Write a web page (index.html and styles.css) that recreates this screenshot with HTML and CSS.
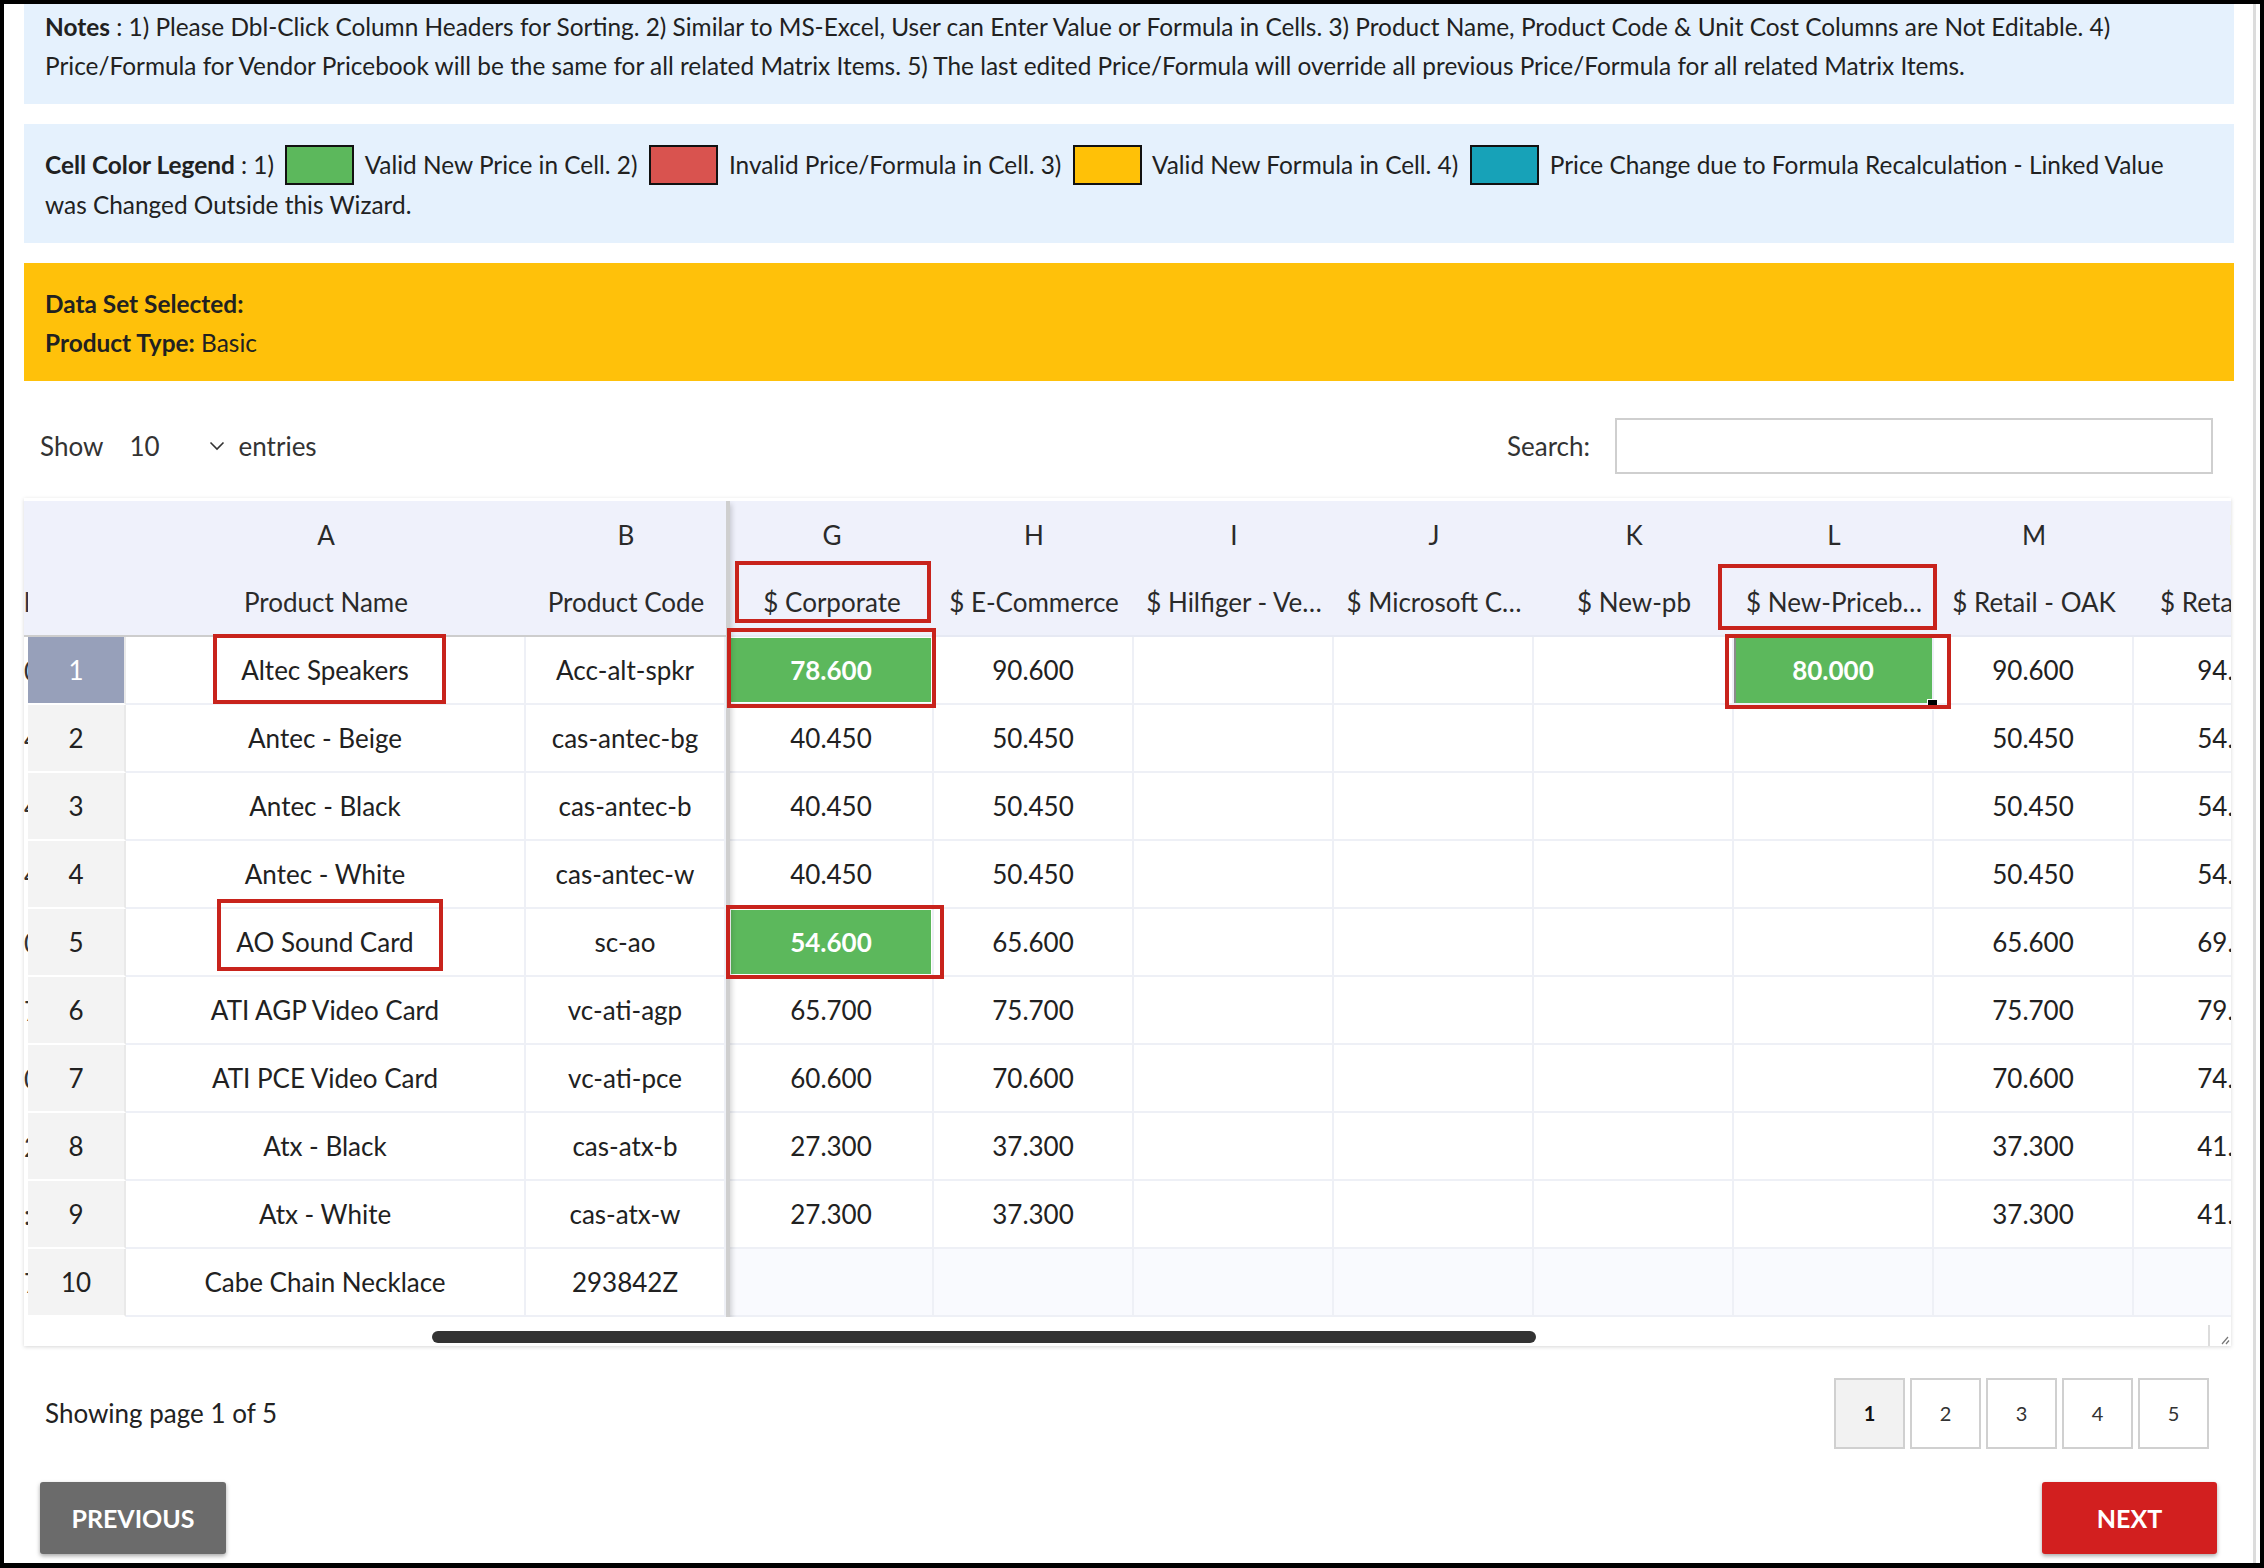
FILE: index.html
```html
<!DOCTYPE html>
<html>
<head>
<meta charset="utf-8">
<link rel="stylesheet" href="styles.css">
</head>
<body>
<div class="frame">
<div class="page">
  <div class="panel notes"><b>Notes</b> : 1) Please Dbl-Click Column Headers for Sorting. 2) Similar to MS-Excel, User can Enter Value or Formula in Cells. 3) Product Name, Product Code &amp; Unit Cost Columns are Not Editable. 4)<br>Price/Formula for Vendor Pricebook will be the same for all related Matrix Items. 5) The last edited Price/Formula will override all previous Price/Formula for all related Matrix Items.</div>
  <div class="panel legend"><b>Cell Color Legend</b> : 1) <span class="sw sw-green"></span> Valid New Price in Cell. 2) <span class="sw sw-red"></span> Invalid Price/Formula in Cell. 3) <span class="sw sw-yellow"></span> Valid New Formula in Cell. 4) <span class="sw sw-teal"></span> Price Change due to Formula Recalculation - Linked Value<br>was Changed Outside this Wizard.</div>
  <div class="panel dataset"><b>Data Set Selected:</b><br><b>Product Type:</b> Basic</div>

  <div class="controls">
    <div class="length"><span>Show</span><span class="sel"><span>10</span><svg width="16" height="10" viewBox="0 0 16 10"><path d="M1.5 1.5 L8 8 L14.5 1.5" fill="none" stroke="#333" stroke-width="1.6"/></svg></span><span>entries</span></div>
    <div class="search"><span>Search:</span><span class="input"></span></div>
  </div>

  <div class="table">
    <div class="grid">
      <div class="frozen">
        <div class="row hrow"><div class="c strip"></div><div class="c num"></div><div class="c">A</div><div class="c">B</div></div>
        <div class="row hrow names"><div class="c strip"><span>l</span></div><div class="c num"></div><div class="c">Product Name</div><div class="c">Product Code</div></div>
        <div class="row drow"><div class="c strip"><span>0</span></div><div class="c num sel-num">1</div><div class="c">Altec Speakers</div><div class="c">Acc-alt-spkr</div></div>
        <div class="row drow"><div class="c strip"><span>4</span></div><div class="c num">2</div><div class="c">Antec - Beige</div><div class="c">cas-antec-bg</div></div>
        <div class="row drow"><div class="c strip"><span>4</span></div><div class="c num">3</div><div class="c">Antec - Black</div><div class="c">cas-antec-b</div></div>
        <div class="row drow"><div class="c strip"><span>4</span></div><div class="c num">4</div><div class="c">Antec - White</div><div class="c">cas-antec-w</div></div>
        <div class="row drow"><div class="c strip"><span>0</span></div><div class="c num">5</div><div class="c">AO Sound Card</div><div class="c">sc-ao</div></div>
        <div class="row drow"><div class="c strip"><span>7</span></div><div class="c num">6</div><div class="c">ATI AGP Video Card</div><div class="c">vc-ati-agp</div></div>
        <div class="row drow"><div class="c strip"><span>0</span></div><div class="c num">7</div><div class="c">ATI PCE Video Card</div><div class="c">vc-ati-pce</div></div>
        <div class="row drow"><div class="c strip"><span>2</span></div><div class="c num">8</div><div class="c">Atx - Black</div><div class="c">cas-atx-b</div></div>
        <div class="row drow"><div class="c strip"><span>:</span></div><div class="c num">9</div><div class="c">Atx - White</div><div class="c">cas-atx-w</div></div>
        <div class="row drow"><div class="c strip"><span>7</span></div><div class="c num">10</div><div class="c">Cabe Chain Necklace</div><div class="c">293842Z</div></div>
      </div>
      <div class="scroll">
        <div class="row hrow"><div class="c">G</div><div class="c">H</div><div class="c">I</div><div class="c">J</div><div class="c">K</div><div class="c">L</div><div class="c">M</div><div class="c last">N</div></div>
        <div class="row hrow names"><div class="c">$ Corporate</div><div class="c">$ E-Commerce</div><div class="c">$ Hilfiger - Ve…</div><div class="c">$ Microsoft C…</div><div class="c">$ New-pb</div><div class="c">$ New-Priceb…</div><div class="c">$ Retail - OAK</div><div class="c last">$ Retail - SFO</div></div>
        <div class="row drow"><div class="c ok">78.600</div><div class="c">90.600</div><div class="c"></div><div class="c"></div><div class="c"></div><div class="c ok cur">80.000<span class="handle"></span></div><div class="c">90.600</div><div class="c last">94.600</div></div>
        <div class="row drow"><div class="c">40.450</div><div class="c">50.450</div><div class="c"></div><div class="c"></div><div class="c"></div><div class="c"></div><div class="c">50.450</div><div class="c last">54.450</div></div>
        <div class="row drow"><div class="c">40.450</div><div class="c">50.450</div><div class="c"></div><div class="c"></div><div class="c"></div><div class="c"></div><div class="c">50.450</div><div class="c last">54.450</div></div>
        <div class="row drow"><div class="c">40.450</div><div class="c">50.450</div><div class="c"></div><div class="c"></div><div class="c"></div><div class="c"></div><div class="c">50.450</div><div class="c last">54.450</div></div>
        <div class="row drow"><div class="c ok">54.600</div><div class="c">65.600</div><div class="c"></div><div class="c"></div><div class="c"></div><div class="c"></div><div class="c">65.600</div><div class="c last">69.600</div></div>
        <div class="row drow"><div class="c">65.700</div><div class="c">75.700</div><div class="c"></div><div class="c"></div><div class="c"></div><div class="c"></div><div class="c">75.700</div><div class="c last">79.700</div></div>
        <div class="row drow"><div class="c">60.600</div><div class="c">70.600</div><div class="c"></div><div class="c"></div><div class="c"></div><div class="c"></div><div class="c">70.600</div><div class="c last">74.600</div></div>
        <div class="row drow"><div class="c">27.300</div><div class="c">37.300</div><div class="c"></div><div class="c"></div><div class="c"></div><div class="c"></div><div class="c">37.300</div><div class="c last">41.300</div></div>
        <div class="row drow"><div class="c">27.300</div><div class="c">37.300</div><div class="c"></div><div class="c"></div><div class="c"></div><div class="c"></div><div class="c">37.300</div><div class="c last">41.300</div></div>
        <div class="row drow empty"><div class="c"></div><div class="c"></div><div class="c"></div><div class="c"></div><div class="c"></div><div class="c"></div><div class="c"></div><div class="c last"></div></div>
      </div>
    </div>
    <div class="track">
      <div class="thumb"></div>
      <svg class="grip" width="23" height="21" viewBox="0 0 23 21"><path d="M1 0 V21" stroke="#dcdcdc" stroke-width="2"/><path d="M14 19 L20 12 M18 19 L21 15.5" stroke="#777" stroke-width="1.2" fill="none"/></svg>
    </div>
    <div class="mark m1"></div>
    <div class="mark m2"></div>
    <div class="mark m3"></div>
    <div class="mark m4"></div>
    <div class="mark m5"></div>
    <div class="mark m6"></div>
    <div class="mark m7"></div>
  </div>

  <div class="paging">
    <div class="info">Showing page 1 of 5</div>
    <div class="pages"><span class="pg active">1</span><span class="pg">2</span><span class="pg">3</span><span class="pg">4</span><span class="pg">5</span></div>
  </div>

  <div class="actions">
    <div class="btn prev">PREVIOUS</div>
    <div class="btn next">NEXT</div>
  </div>
</div>
</div>
</body>
</html>
```

FILE: styles.css
```css
* { box-sizing: border-box; }
html, body { margin: 0; padding: 0; }
body {
  width: 2264px;
  height: 1568px;
  overflow: hidden;
  background: #fff;
  color: #212121;
  font-family: Lato, "Open Sans", sans-serif;
}
.frame {
  width: 2264px;
  height: 1568px;
  border: 4px solid #000;
  border-bottom-width: 5px;
  overflow: hidden;
}
.page {
  height: 100%;
  margin-right: 4px;
  border-right: 3px solid #dcdcdc;
  padding: 0 19px 0 20px;
}

/* info panels */
.panel {
  background: #e5f1fd;
  padding: 21px 21px 19px;
  font-size: 24.4px;
  line-height: 39px;
  white-space: nowrap;
}
.panel b { font-weight: 700; }
.notes { padding-top: 3px; padding-bottom: 19px; }
.panel + .panel { margin-top: 20px; }
.dataset { background: #ffc10a; }

.sw {
  display: inline-block;
  width: 69px;
  height: 40px;
  border: 2px solid #111;
  vertical-align: middle;
  margin: -6px 5px 0;
}
.sw-green { background: #5cb85c; }
.sw-red { background: #d9534f; }
.sw-yellow { background: #ffc107; }
.sw-teal { background: #17a2b8; }

/* controls */
.controls {
  height: 117px;
  padding: 13px 21px 0 16px;
  display: flex;
  align-items: center;
  justify-content: space-between;
  font-size: 26px;
  color: #333;
}
.length { display: flex; align-items: center; }
.sel { display: flex; align-items: center; margin: 0 14px 0 26px; }
.sel svg { margin-left: 49px; }
.search { display: flex; align-items: center; }
.input {
  width: 598px;
  height: 56px;
  margin-left: 25px;
  border: 2px solid #cfcfcf;
  background: #fff;
}

/* table */
.table {
  position: relative;
  margin-right: 3px;
  padding-top: 3px;
  background: #fff;
  box-shadow: 0 1px 4px rgba(0, 0, 0, 0.16);
}
.grid { display: flex; overflow: hidden; }
.frozen {
  flex: none;
  width: 706px;
  border-right: 4px solid #cfcfcf;
  position: relative;
  z-index: 1;
  background: #fff;
  box-shadow: 2px 3px 5px rgba(0, 0, 0, 0.16);
}
.scroll { flex: 1; overflow: hidden; min-width: 0; }

.row { display: grid; height: 68px; font-size: 26px; }
.frozen .row { grid-template-columns: 4px 98px 400px 200px; }
.scroll .row { grid-template-columns: 204px repeat(7, 200px) 200px; width: 1604px; }

.c {
  display: flex;
  align-items: center;
  justify-content: center;
  white-space: nowrap;
  overflow: hidden;
  min-width: 0;
}
.c.last { padding-left: 10px; }
.hrow { background: #eff1fb; color: #2a2a2a; }
.hrow.names { border-bottom: 2px solid #cdcdcd; }
.scroll .hrow.names { border-bottom-color: #e6e9f3; }

.drow .c {
  border-right: 2px solid #eef0f6;
  border-bottom: 2px solid #eef0f6;
  background: #fff;
}
.drow .strip { border: 0; }
.strip { justify-content: flex-start; color: #333; }
.drow .num { background: #f3f3f3; border-right-color: #e9e9e9; border-bottom-color: #fff; }
.drow .sel-num { background: #97a0ba; color: #fff; }
.drow.empty .c { background: #f9fafe; }

.drow .ok {
  background: #5cb85c;
  color: #fff;
  font-weight: 700;
  box-shadow: inset 0 0 0 1px #fff;
}
.drow .cur {
  overflow: visible;
  position: relative;
  box-shadow: inset 2px 0 0 #8a8a8a;
}
.handle {
  position: absolute;
  right: -6px;
  bottom: -7px;
  width: 11px;
  height: 11px;
  background: #000;
  border: 1px solid #fff;
  z-index: 2;
}

.track { display: flex; height: 29px; align-items: flex-start; }
.thumb {
  margin: 14px 0 0 408px;
  width: 1104px;
  height: 12px;
  border-radius: 6px;
  background: #333;
}
.grip { margin: 8px 0 0 auto; display: block; }

/* annotation boxes */
.mark {
  position: absolute;
  border: 4px solid #c8231c;
  z-index: 5;
}
.m1 { left: 189px; top: 136px; width: 233px; height: 70px; }
.m2 { left: 193px; top: 401px; width: 226px; height: 72px; }
.m3 { left: 711px; top: 63px; width: 196px; height: 62px; }
.m4 { left: 703px; top: 130px; width: 209px; height: 80px; }
.m5 { left: 702px; top: 407px; width: 218px; height: 74px; }
.m6 { left: 1694px; top: 66px; width: 219px; height: 66px; }
.m7 { left: 1701px; top: 136px; width: 226px; height: 75px; }

/* paging */
.paging {
  margin-top: 32px;
  padding: 0 25px 0 21px;
  display: flex;
  align-items: center;
  justify-content: space-between;
}
.info { font-size: 26px; color: #222; }
.pages { display: flex; gap: 5px; }
.pg {
  width: 71px;
  height: 71px;
  border: 2px solid #d0d0d0;
  display: flex;
  align-items: center;
  justify-content: center;
  font-size: 20px;
  color: #333;
  background: #fff;
}
.pg.active { background: #f2f2f2; font-weight: 700; color: #111; }

.actions {
  margin-top: 33px;
  padding: 0 17px 0 16px;
  display: flex;
  justify-content: space-between;
}
.btn {
  height: 72px;
  border-radius: 3px;
  color: #fff;
  font-weight: 700;
  font-size: 25px;
  display: flex;
  align-items: center;
  justify-content: center;
  box-shadow: 0 2px 4px rgba(0, 0, 0, 0.35);
}
.prev { width: 186px; background: #6b6b6b; }
.next { width: 175px; background: #d21f1f; }
```
